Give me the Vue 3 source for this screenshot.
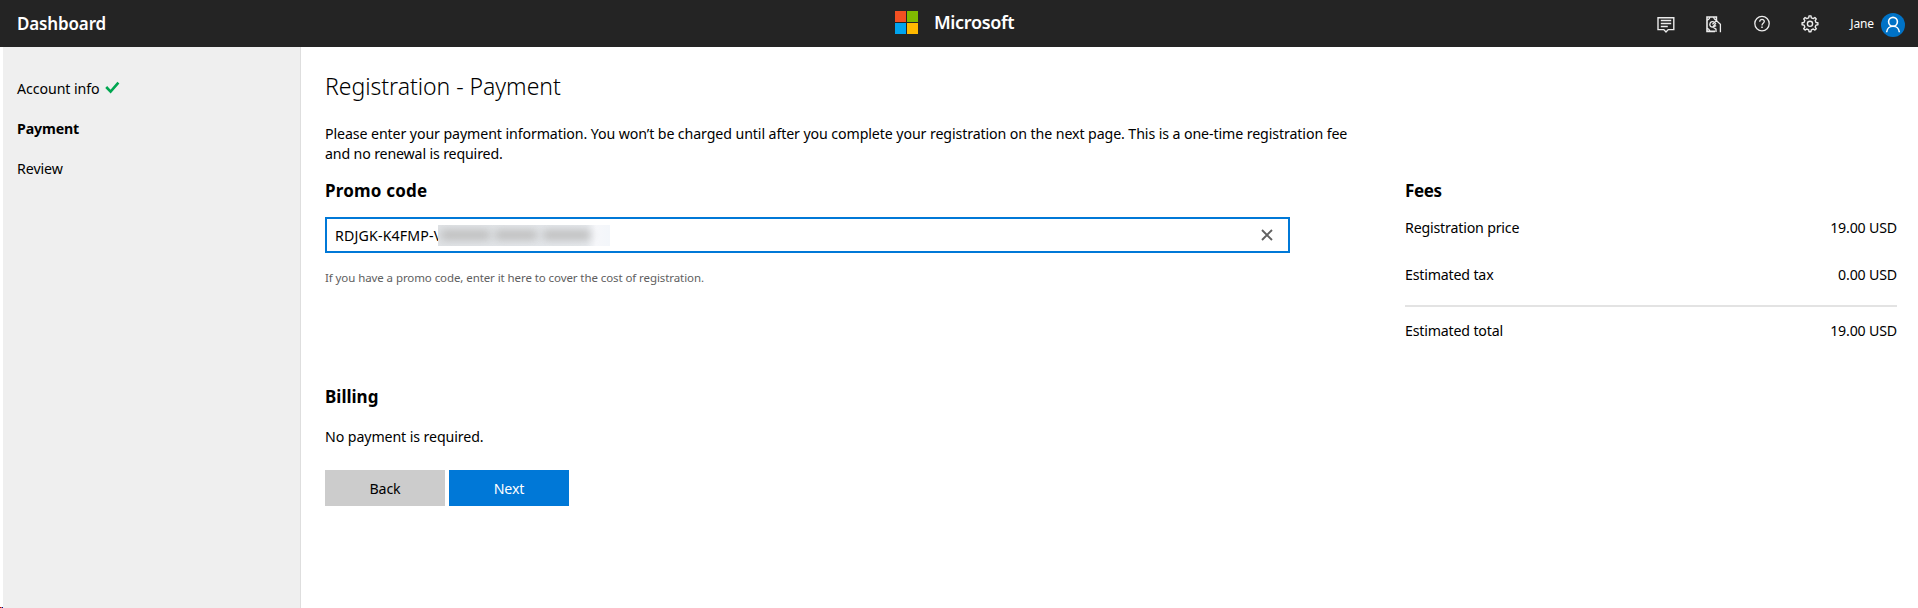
<script setup>
import { ref } from 'vue'

const steps = [
  { label: 'Account info', done: true },
  { label: 'Payment', current: true },
  { label: 'Review' },
]
const fees = [
  { label: 'Registration price', amount: '19.00 USD' },
  { label: 'Estimated tax', amount: '0.00 USD' },
  { label: 'Estimated total', amount: '19.00 USD', total: true },
]
const promo = ref('RDJGK-K4FMP-V')
</script>

<template>
  <div class="page">
    <header class="topbar">
      <div class="title">Dashboard</div>
      <div class="brand">
        <svg class="logo" width="23" height="23" viewBox="0 0 23 23" shape-rendering="crispEdges">
          <rect width="11" height="11" fill="#f35022" />
          <rect x="12" width="11" height="11" fill="#7fba00" />
          <rect y="12" width="11" height="11" fill="#00a4ef" />
          <rect x="12" y="12" width="11" height="11" fill="#ffb900" />
        </svg>
        <span class="brand-name">Microsoft</span>
      </div>
      <div class="tools">
        <svg class="icon" width="18" height="18" viewBox="0 0 18 18" fill="none" stroke="#ececec" stroke-width="1.4">
          <path d="M1 1.7H16.8V13.6H11.2L9 15.9L6.8 13.6H1Z" />
          <path d="M3.8 4.5H14.2M3.8 7.5H14.2M3.8 10.5H10.8" />
        </svg>
        <svg class="icon" width="18" height="18" viewBox="0 0 18 18" fill="none" stroke="#ececec" stroke-width="1.3">
          <path d="M10 15.4H2V1H11.4V5" stroke-width="1.6" />
          <path d="M2 4.2Q4.4 3.8 4.8 1M8.6 1Q9 3.6 11.4 4M2 12.4Q4.4 12.8 4.8 15.6" />
          <path d="M9.6 6Q5.4 4.6 4.8 8.4Q5 11.4 7.8 11L11 7.2M7.8 11L11.2 9.6M7.4 8.2L11.6 4.8L15.4 8.4V16.2M8.2 11.2L11 13.2V16" />
        </svg>
        <svg class="icon" width="18" height="18" viewBox="0 0 18 18" fill="none" stroke="#ececec" stroke-width="1.3">
          <circle cx="9" cy="8.6" r="7.2" />
          <path d="M6.7 6.8C6.7 3.6 11.4 3.8 11.3 6.6C11.2 8.4 9 8.2 9 10.4" />
          <path d="M9 11.6V13.1" stroke-width="1.5" />
        </svg>
        <svg class="icon" width="18" height="18" viewBox="0 0.2 18 18" fill="none" stroke="#ececec" stroke-width="1.4" stroke-linejoin="round">
          <path d="M7.7 3L8 1.1H10L10.3 3L12.3 3.8L13.9 2.7L15.3 4.1L14.2 5.7L15 7.7L16.9 8V10L15 10.3L14.2 12.3L15.3 13.9L13.9 15.3L12.3 14.2L10.3 15L10 16.9H8L7.7 15L5.7 14.2L4.1 15.3L2.7 13.9L3.8 12.3L3 10.3L1.1 10V8L3 7.7L3.8 5.7L2.7 4.1L4.1 2.7L5.7 3.8Z" />
          <circle cx="9" cy="9" r="2.6" />
        </svg>
        <span class="user">Jane</span>
        <svg class="avatar" width="24" height="24" viewBox="0 0 24 24" fill="none">
          <circle cx="12" cy="12" r="12" fill="#0072c6" />
          <g stroke="#fff" stroke-width="1.6">
            <circle cx="12" cy="8.8" r="4.4" />
            <path d="M5.6 19.3C6.2 11.2 17.8 11.2 18.4 19.3" />
          </g>
        </svg>
      </div>
    </header>

    <div class="body">
      <nav class="sidebar">
        <a v-for="s in steps" :key="s.label" class="step" :class="{ current: s.current }">
          <span>{{ s.label }}</span>
          <svg v-if="s.done" class="check" width="15" height="13" viewBox="0 0 15 13" fill="none">
            <path d="M1.2 6L5.6 10.6L13.4 1.6" stroke="#00a650" stroke-width="2.6" />
          </svg>
        </a>
      </nav>

      <main class="content">
        <h1>Registration - Payment</h1>
        <p class="intro">
          <span class="line first">Please enter your payment information. You won’t be charged until after you complete your registration on the next page. This is a one-time registration fee</span>
          <span class="line">and no renewal is required.</span>
        </p>
        <div class="columns">
          <section class="form">
            <h2 class="promo-title">Promo code</h2>
            <div class="field">
              <span class="code">{{ promo }}</span>
              <span class="redacted"><i class="smudge a"></i><i class="smudge b"></i><i class="smudge c"></i></span>
              <svg class="clear" width="12" height="12" viewBox="0 0 12 12">
                <path d="M1 1L11 11M11 1L1 11" stroke="#606060" stroke-width="1.9" />
              </svg>
            </div>
            <p class="hint">If you have a promo code, enter it here to cover the cost of registration.</p>
            <h2 class="billing">Billing</h2>
            <p class="note">No payment is required.</p>
            <div class="actions">
              <button class="btn back">Back</button>
              <button class="btn next">Next</button>
            </div>
          </section>
          <aside class="fees">
            <h2 class="fees-title">Fees</h2>
            <div v-for="f in fees" :key="f.label" class="fee" :class="{ total: f.total }">
              <span>{{ f.label }}</span><span>{{ f.amount }}</span>
            </div>
          </aside>
        </div>
      </main>
    </div>
    <div class="corner"></div>
  </div>
</template>

<style>
body { margin: 0; background: #fff; }
</style>

<style scoped>
.page {
  position: relative;
  height: 608px;
  overflow: hidden;
  display: flex;
  flex-direction: column;
  font: 14.2px/20px "Noto Sans", "Open Sans", sans-serif;
  letter-spacing: -0.15px;
  color: #000;
}
.topbar {
  height: 47px;
  flex: none;
  display: grid;
  grid-template-columns: 1fr auto 1fr;
  background: #242424;
  color: #fff;
}
.title { padding: 11px 0 0 17px; font-size: 17px; line-height: 25px; font-weight: 600; letter-spacing: -0.15px; }
.brand { display: flex; width: 128px; }
.logo { margin-top: 11px; flex: none; }
.brand-name { margin: 10px 0 0 16px; font-size: 18px; line-height: 25px; font-weight: 600; letter-spacing: -0.35px; }
.tools { display: flex; justify-content: flex-end; align-items: flex-start; padding-right: 13px; }
.icon { margin: 15px 30px 0 0; }
.icon:nth-of-type(2) { margin-top: 16px; }
.icon:nth-of-type(1) { margin-top: 16px; }
.user { font-size: 12px; line-height: 18px; letter-spacing: -0.1px; margin: 15px 7px 0 1px; }
.avatar { margin-top: 13px; }
.body { flex: 1; display: flex; }
.sidebar {
  box-sizing: border-box;
  width: 298px;
  margin-left: 3px;
  padding: 32px 0 0 14px;
  background: #efefef;
  border-right: 1px solid #dedede;
}
.step { display: flex; height: 20px; margin-bottom: 20px; letter-spacing: -0.08px; }
.current { font-weight: 700; letter-spacing: -0.15px; }
.check { margin: 2px 0 0 5px; }
.content { padding: 24px 0 0 24px; width: 1567px; }
h1 { margin: 0; font-size: 23px; line-height: 30px; font-weight: 300; letter-spacing: -0.03px; }
.intro { margin: 23px 0 0; white-space: nowrap; }
.line { display: block; }
.first { letter-spacing: -0.1px; }
.columns { display: flex; justify-content: space-between; }
.form { width: 965px; }
h2 { margin: 0; font-size: 17px; line-height: 24px; font-weight: 700; }
.promo-title { margin-top: 15px; letter-spacing: 0.2px; }
.field {
  position: relative;
  box-sizing: border-box;
  height: 36px;
  margin-top: 14px;
  padding: 7px 0 0 8px;
  border: 2px solid #0078d7;
}
.code { letter-spacing: 0.15px; }
.redacted {
  position: absolute;
  left: 111px;
  top: 6px;
  width: 172px;
  height: 21px;
  overflow: hidden;
  background: linear-gradient(90deg, #e0e3e6 0, #e6e9ed 148px, #f6f7fa 158px, #f3f6fa 172px);
}
.smudge { position: absolute; top: 5px; height: 10px; background: #bdbdbd; filter: blur(4px); }
.a { left: 3px; width: 49px; }
.b { left: 57px; width: 42px; }
.c { left: 105px; width: 47px; }
.clear { position: absolute; right: 15px; top: 10px; }
.hint { margin: 15px 0 0; font-size: 11.5px; line-height: 20px; letter-spacing: -0.085px; color: #5e5e5e; }
.billing { margin-top: 97px; letter-spacing: 0; }
.note { margin: 18px 0 0; letter-spacing: -0.1px; }
.actions { display: flex; gap: 4px; margin-top: 23px; }
.btn { width: 120px; height: 36px; border: 0; padding: 1px 0 0; font: inherit; letter-spacing: -0.15px; }
.back { background: #ccc; color: #000; }
.next { background: #0078d7; color: #fff; }
.fees { width: 492px; margin-right: -5px; flex: none; }
.fees-title { margin: 15px 0 15px; letter-spacing: -0.35px; }
.fee { display: flex; justify-content: space-between; height: 20px; margin-bottom: 27px; letter-spacing: -0.18px; }
.total { border-top: 2px solid #e3e3e3; margin-top: -7px; padding-top: 14px; }
.corner {
  position: absolute;
  left: 0;
  bottom: 0;
  width: 3px;
  height: 1px;
  background: linear-gradient(90deg, #c00000 1px, #a08060 1px 2px, #0000a0 2px);
}
</style>
